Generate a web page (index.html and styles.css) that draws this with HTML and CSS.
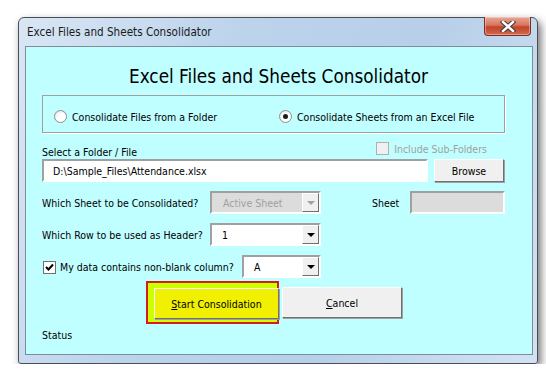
FILE: index.html
```html
<!DOCTYPE html>
<html lang="en">
<head>
    <meta charset="UTF-8">
    <title>Excel Files and Sheets Consolidator</title>
    <link rel="stylesheet" href="styles.css">
</head>
<body>
    <div class="window">
        <!-- Title bar -->
        <div class="title-bar">
            <span class="title-text">Excel Files and Sheets Consolidator</span>
            <div class="close-btn">
                <svg width="16" height="11" viewBox="0 0 16 11">
                    <path d="M3 1 L13 10 M13 1 L3 10" stroke="#3a3a3a" stroke-width="4.5" stroke-linecap="square"/>
                    <path d="M3 1 L13 10 M13 1 L3 10" stroke="#ffffff" stroke-width="2.5" stroke-linecap="square"/>
                </svg>
            </div>
        </div>

        <!-- Form -->
        <div class="client">
            <h1 class="heading">Excel Files and Sheets Consolidator</h1>

            <div class="option-frame">
                <label class="radio-item first">
                    <span class="radio"></span>
                    Consolidate Files from a Folder
                </label>
                <label class="radio-item">
                    <span class="radio checked"><span class="dot"></span></span>
                    Consolidate Sheets from an Excel File
                </label>
            </div>

            <div class="select-row">
                <span class="label">Select a Folder / File</span>
                <span class="sub-folders">
                    <span class="checkbox disabled"></span>
                    Include Sub-Folders
                </span>
            </div>

            <div class="row">
                <div class="textbox path-box">D:\Sample_Files\Attendance.xlsx</div>
                <div class="button browse-btn">Browse</div>
            </div>

            <div class="row">
                <span class="label row-label">Which Sheet to be Consolidated?</span>
                <div class="combo disabled sheet-combo">
                    <span class="combo-text">Active Sheet</span>
                    <span class="combo-arrow"><span class="tri"></span></span>
                </div>
                <span class="label sheet-label">Sheet</span>
                <div class="textbox disabled sheet-box"></div>
            </div>

            <div class="row">
                <span class="label row-label">Which Row to be used as Header?</span>
                <div class="combo header-combo">
                    <span class="combo-text">1</span>
                    <span class="combo-arrow"><span class="tri"></span></span>
                </div>
            </div>

            <div class="row">
                <label class="check-label">
                    <span class="checkbox">
                        <svg width="9" height="9" viewBox="0 0 9 9">
                            <path d="M1 4 L3.5 6.5 L8 1.5" fill="none" stroke="#000" stroke-width="2"/>
                        </svg>
                    </span>
                    My data contains non-blank column?
                </label>
                <div class="combo column-combo">
                    <span class="combo-text">A</span>
                    <span class="combo-arrow"><span class="tri"></span></span>
                </div>
            </div>

            <div class="action-row">
                <div class="start-wrap">
                    <div class="button start-btn"><u>S</u>tart Consolidation</div>
                </div>
                <div class="button cancel-btn"><u>C</u>ancel</div>
            </div>

            <div class="status">Status</div>
        </div>
    </div>
</body>
</html>
```

FILE: styles.css
```css
body {
    margin: 0;
    background: #ffffff;
    font-family: 'DejaVu Sans Condensed', 'DejaVu Sans', sans-serif;
    font-size: 10.5px;
    color: #000000;
    white-space: nowrap;
}

.window {
    margin: 17px 0 0 18px;
    width: 508px;
    height: 341px;
    border: 1px solid #4a4f57;
    border-radius: 6px 6px 3px 3px;
    background: linear-gradient(110deg, #d9e6f4 0%, #bcd3ec 35%, #b7cfe9 65%, #d3e2f2 100%);
    box-shadow: 3px 4px 8px rgba(0, 0, 0, 0.55);
    padding: 0 4px 4px 6px;
    box-sizing: content-box;
    position: relative;
}

/* Title bar */
.title-bar {
    height: 28px;
    display: flex;
    align-items: center;
    justify-content: space-between;
}

.title-text {
    font-size: 11.6px;
    color: #1a1a1a;
    padding-left: 2px;
    margin-top: -1px;
}

.close-btn {
    align-self: flex-start;
    width: 45px;
    height: 18px;
    margin-top: -1px;
    margin-right: 2px;
    border: 1px solid #7d2f22;
    border-top: none;
    border-radius: 0 0 4px 4px;
    background: linear-gradient(to bottom, #e7a796 0%, #d6755f 45%, #c2432a 55%, #cf6a4d 100%);
    display: flex;
    align-items: center;
    justify-content: center;
    box-shadow: inset 0 0 0 1px rgba(255, 255, 255, 0.35);
}

/* Client area */
.client {
    height: 307px;
    background: #c0ffff;
    border: 1px solid #7f8d9b;
    padding: 0 17px 0 16px;
}

.heading {
    margin: 0;
    padding-top: 20px;
    height: 20px;
    line-height: 20px;
    margin-bottom: 8px;
    text-align: center;
    font-weight: normal;
    font-size: 18.8px;
    color: #000000;
}

.option-frame {
    width: 461px;
    height: 35px;
    box-sizing: content-box;
    border: 1px solid #a0a0a0;
    box-shadow: 1px 1px 0 #ffffff;
    display: flex;
    align-items: center;
    padding-top: 1px;
}

.option-frame .radio-item {
    margin-top: 4px;
}

.radio-item {
    display: flex;
    align-items: center;
    gap: 5px;
}

.radio-item.first {
    margin-left: 11px;
    width: 225px;
}

.radio {
    width: 11px;
    height: 11px;
    border-radius: 50%;
    border: 1px solid #8e8f8f;
    background: radial-gradient(circle at 60% 65%, #ffffff 40%, #d8d8d8 100%);
    display: flex;
    align-items: center;
    justify-content: center;
}

.radio .dot {
    width: 5px;
    height: 5px;
    border-radius: 50%;
    background: #1a1a1a;
}

.select-row {
    margin-top: 9px;
    height: 16px;
    display: flex;
    align-items: center;
    justify-content: space-between;
    width: 445px;
    padding-top: 1px;
}

.sub-folders {
    display: flex;
    align-items: center;
    gap: 5px;
    color: #a0a0a0;
    margin-top: -5px;
}

.checkbox {
    width: 11px;
    height: 11px;
    border: 1px solid #707070;
    background: #ffffff;
    display: flex;
    align-items: center;
    justify-content: center;
}

.checkbox.disabled {
    border-color: #b0b0b0;
    background: #f0f0f0;
}

.row {
    margin-top: 9px;
    height: 23px;
    display: flex;
    align-items: center;
}

.select-row + .row {
    margin-top: 0;
}

.label,
.combo-text,
.check-label {
    padding-top: 1px;
}

.textbox {
    height: 18px;
    border: 2px solid;
    border-color: #a0a0a0 #ffffff #ffffff #a0a0a0;
    background: #ffffff;
    display: flex;
    align-items: center;
    padding: 1px 0 0 9px;
    box-sizing: content-box;
}

.path-box {
    width: 373px;
}

.button {
    background: #f0f0f0;
    border: 1px solid;
    border-color: #ffffff #707070 #707070 #ffffff;
    box-shadow: 1px 1px 0 #a0a0a0;
    display: flex;
    align-items: center;
    justify-content: center;
    box-sizing: border-box;
    padding-top: 1px;
}

.browse-btn {
    margin-left: 6px;
    width: 70px;
    height: 23px;
}

.row-label {
    width: 168px;
}

.combo {
    height: 23px;
    box-sizing: border-box;
    border: 2px solid;
    border-color: #a0a0a0 #ffffff #ffffff #a0a0a0;
    background: #ffffff;
    display: flex;
    align-items: center;
    justify-content: space-between;
}

.combo-text {
    padding-left: 10px;
}

.combo-arrow {
    width: 17px;
    height: 19px;
    box-sizing: border-box;
    background: #f0f0f0;
    border: 1px solid;
    border-color: #ffffff #707070 #707070 #ffffff;
    display: flex;
    align-items: center;
    justify-content: center;
}

.tri {
    width: 0;
    height: 0;
    border-left: 4px solid transparent;
    border-right: 4px solid transparent;
    border-top: 4px solid #000000;
}

.combo.disabled {
    background: #dcdcdc;
    color: #a0a0a0;
}

.combo.disabled .combo-text {
    padding-left: 11px;
}

.combo.disabled .tri {
    border-top-color: #a0a0a0;
}

.sheet-combo,
.header-combo {
    width: 111px;
}

.sheet-label {
    margin-left: 51px;
    width: 38px;
}

.textbox.disabled {
    background: #dcdcdc;
    width: 82px;
    padding-left: 9px;
}

.check-label {
    display: flex;
    align-items: center;
    gap: 4px;
    width: 199px;
    padding-left: 1px;
}

.column-combo {
    width: 79px;
}

.action-row {
    margin-top: 3px;
    display: flex;
    align-items: flex-start;
    padding-left: 104px;
}

.start-wrap {
    width: 133px;
    height: 43px;
    box-sizing: border-box;
    border: 2px solid #d41c1c;
    background: #ccff00;
    padding: 5px 0 0 6px;
}

.start-btn {
    width: 125px;
    height: 31px;
    background: #f0f000;
}

.cancel-btn {
    margin-top: 6px;
    margin-left: 3px;
    width: 120px;
    height: 31px;
}

.status {
    margin-top: 5px;
    height: 12px;
    line-height: 12px;
}
```
